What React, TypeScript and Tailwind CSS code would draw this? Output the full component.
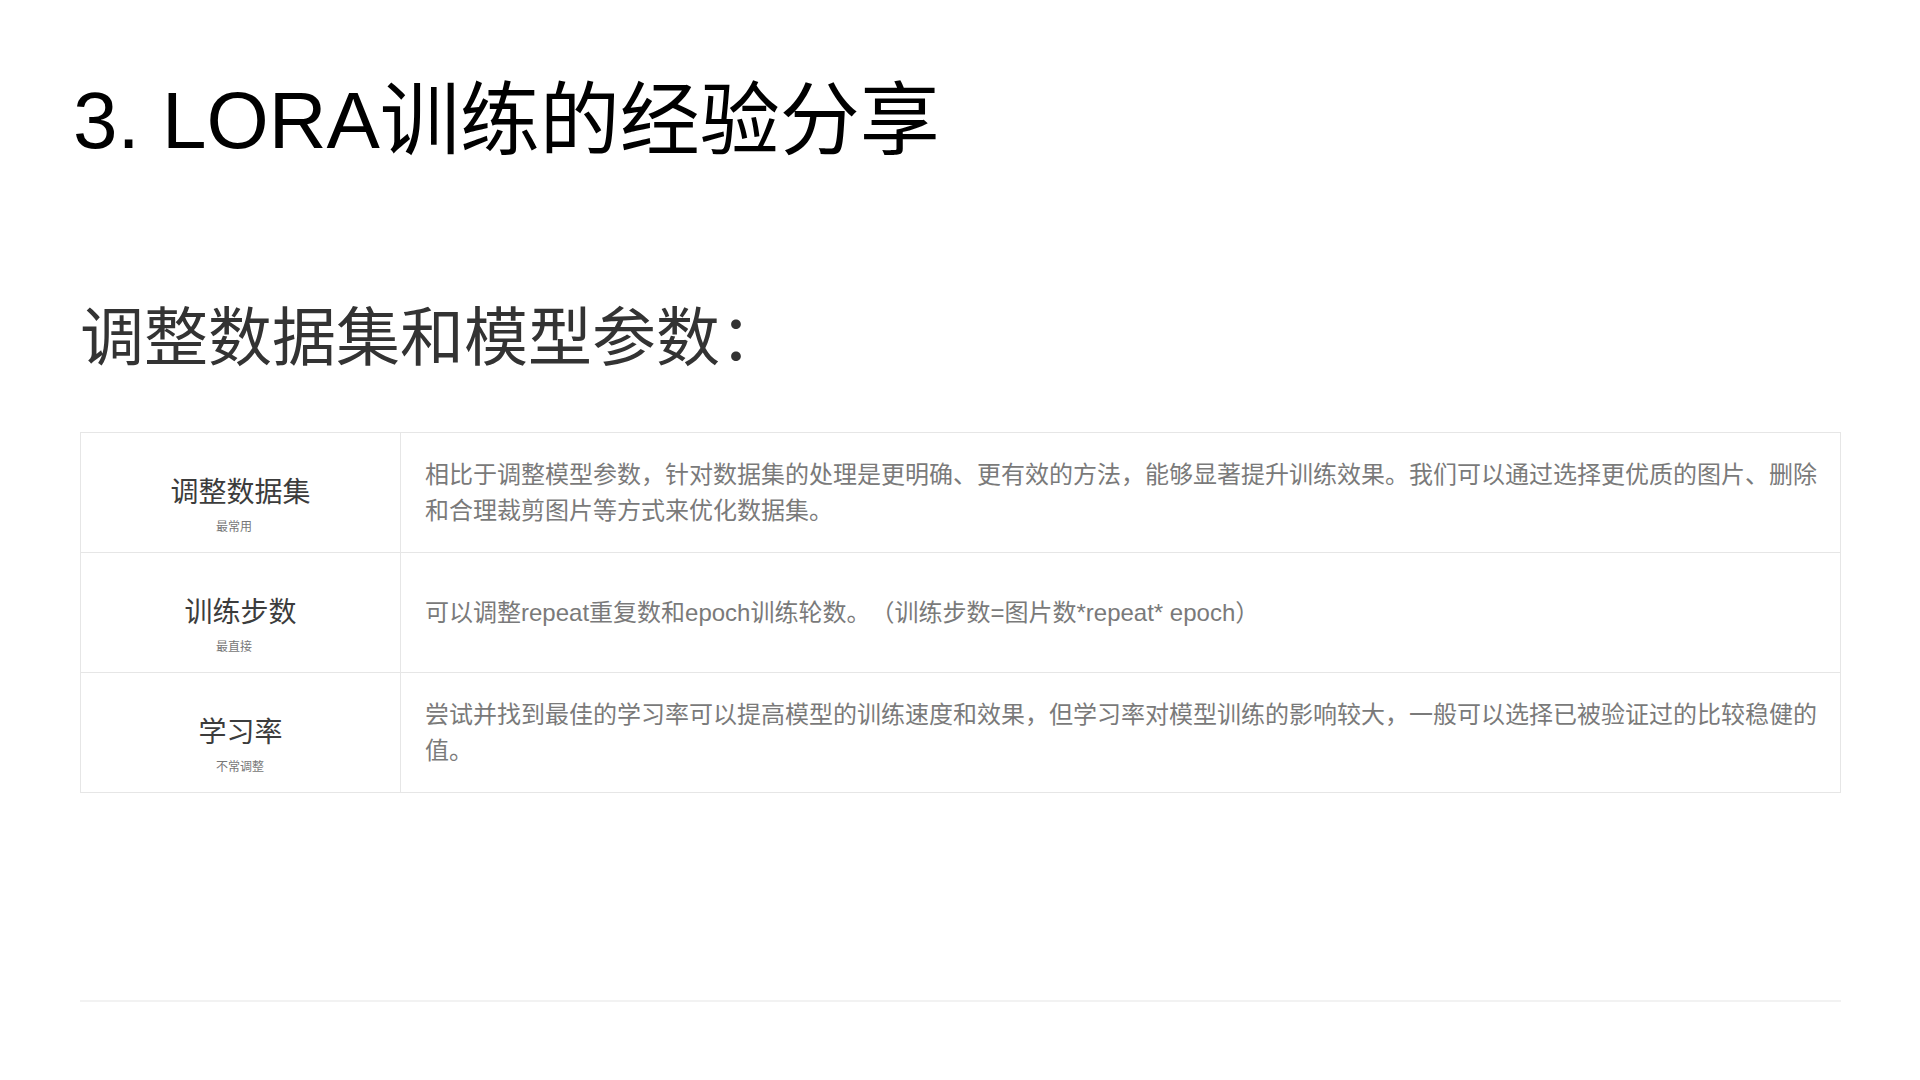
import React from "react";

const rows = [
  {
    label: "调整数据集",
    note: "最常用",
    text: "相比于调整模型参数，针对数据集的处理是更明确、更有效的方法，能够显著提升训练效果。我们可以通过选择更优质的图片、删除和合理裁剪图片等方式来优化数据集。",
  },
  {
    label: "训练步数",
    note: "最直接",
    text: "可以调整repeat重复数和epoch训练轮数。（训练步数=图片数*repeat* epoch）",
  },
  {
    label: "学习率",
    note: "不常调整",
    text: "尝试并找到最佳的学习率可以提高模型的训练速度和效果，但学习率对模型训练的影响较大，一般可以选择已被验证过的比较稳健的值。",
  },
];

export default function App() {
  return (
    <div className="w-[1920px] h-[1080px] bg-white overflow-hidden font-['Liberation_Sans','Noto_Sans_CJK_SC',sans-serif] [text-spacing-trim:space-all]">
      <h1 className="pl-[73px] pt-[81px] text-[80px] leading-[80px] text-black whitespace-nowrap">
        3. LORA训练的经验分享
      </h1>

      <div className="px-[80px]">
        <h2 className="mt-[139px] text-[64px] leading-[64px] text-[#333333] font-['Noto_Sans_CJK_SC',sans-serif]">
          调整数据集和模型参数：
        </h2>

        <div className="mt-[68px] w-[1761px] border-t border-l border-r border-[#e6e6e6]">
          {rows.map((row) => (
            <div
              key={row.label}
              className="grid grid-cols-[320px_1fr] h-[120px] border-b border-[#e6e6e6]"
            >
              <div className="flex flex-col items-center pt-[42px] border-r border-[#e6e6e6]">
                <div className="text-[28px] leading-[36px] text-[#3c3c3c]">
                  {row.label}
                </div>
                <div className="self-start ml-[135px] mt-[8px] text-[12px] leading-[16px] text-[#777777]">
                  {row.note}
                </div>
              </div>
              <div className="flex items-center pl-[24px] pr-[20px]">
                <p className="text-[24px] leading-[36px] text-[#7a7a7a]">
                  {row.text}
                </p>
              </div>
            </div>
          ))}
        </div>

        <div className="mt-[207px] w-[1761px] h-[2px] bg-[#f2f2f2]" />
      </div>
    </div>
  );
}
